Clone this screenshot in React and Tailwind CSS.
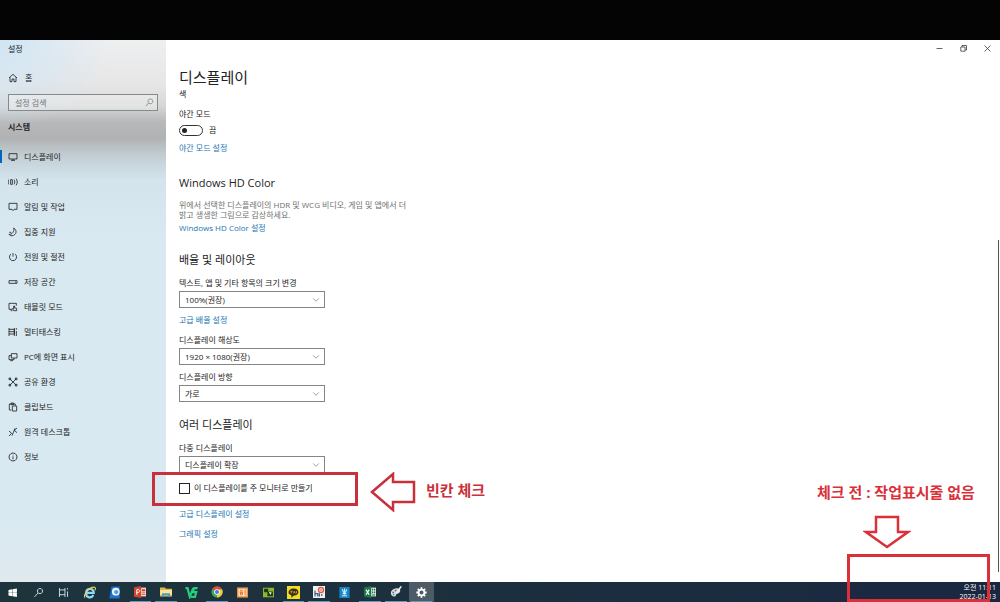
import React, { useState } from 'react';
import { ChevronDown } from 'lucide-react';

const navItems = [
  { label: '디스플레이', icon: <path d="M3 5h24v16H3zM15 21v4M9 25h12" /> },
  { label: '소리', icon: <path d="M2 8c-2 4-2 10 0 14M8 8h5v14H8zM18 8c3 4 3 10 0 14M24 5c5 6 5 14 0 20" /> },
  { label: '알림 및 작업', icon: <path d="M3 4h24v18h-9l-3 4-3-4H3z" /> },
  { label: '집중 지원', icon: <path d="M17 3c9 5 10 17 0 22-6 3-12 1-14-3 9 1 17-8 14-19zM4 16h6" /> },
  { label: '전원 및 절전', icon: <path d="M15 3v11M9 6C1 11 4 26 15 26S29 11 21 6" /> },
  { label: '저장 공간', icon: <path d="M3 11h24v8H3zM21 15h3" /> },
  { label: '태블릿 모드', icon: <path d="M12 22H3V4h22v7M8 26h5M17 26l-4-6 4 1v-9h3v6l6 1v7z" /> },
  { label: '멀티태스킹', icon: <path d="M3 3v24M3 7h16v14H3M19 3v24M3 14h16M25 3v5M25 12v15" /> },
  { label: 'PC에 화면 표시', icon: <path d="M10 5h17v13H10zM10 11H3v12h15v-5M7 26h8" /> },
  { label: '공유 환경', icon: <path d="M6 6l18 18M24 6L6 24M3 3h5v5H3zM22 3h5v5h-5zM3 22h5v5H3zM22 22h5v5h-5z" /> },
  { label: '클립보드', icon: <path d="M10 24H4V6h18v5M9 3h8v5H9zM13 12h13v15H13z" /> },
  { label: '원격 데스크톱', icon: <path d="M3 12l8 7-8 8M27 3l-8 7 8 7M12 26L21 4" /> },
  { label: '정보', icon: <path d="M15 3a12 12 0 1 0 .1 0zM15 13v9M15 8v2" /> },
];

function LineIcon({ children, className = 'size-[10px]' }) {
  return (
    <svg viewBox="0 0 30 30" fill="none" stroke="currentColor" strokeWidth="2.5" className={className} aria-hidden="true">
      {children}
    </svg>
  );
}

function Sidebar() {
  return (
    <aside className="w-[166px] shrink-0 bg-[radial-gradient(110px_90px_at_0_0,#cfe5f5_0%,transparent_100%),linear-gradient(#eeeff0_0,#e6e6e7_45px,#d6d7d7_66px,#b7b8b9_82px,#b0b2b3_98px,#c3ced4_116px,#d3e4ed_140px,#d9e9f1_200px,#d8e9f2_470px,#dfe9ee_542px)]">
      <div className="flex h-[17px] items-center pl-2">설정</div>
      <a href="#home" className="mt-[13px] flex h-4 items-center gap-[7px] pl-2">
        <LineIcon><path d="M3 15L15 4l12 11M6 13v13h6v-8h6v8h6V13" /></LineIcon>
        홈
      </a>
      <div className="relative mx-2 mt-2">
        <input
          type="text"
          aria-label="설정 검색"
          placeholder="설정 검색"
          className="block h-[17px] w-full border border-[#858a8d] bg-white/30 px-1.5 outline-none placeholder:text-[#777]"
        />
        <LineIcon className="absolute right-1 top-1 size-[9px] text-[#777]">
          <path d="M18 3a8 8 0 1 0 .1 0zM12 17L3 27" />
        </LineIcon>
      </div>
      <h2 className="mt-[11px] pl-2 font-bold leading-[10px]">시스템</h2>
      <nav className="mt-3">
        {navItems.map((item, i) => (
          <a key={item.label} href="#settings" className="relative flex h-[25px] items-center gap-1.5 pl-2">
            {i === 0 && <span className="absolute left-0 h-[13px] w-0.5 bg-[#0067c0]" />}
            <LineIcon>{item.icon}</LineIcon>
            {item.label}
          </a>
        ))}
      </nav>
    </aside>
  );
}

function Field({ id, label, value, className }) {
  return (
    <div className={className}>
      <label htmlFor={id} className="block">{label}</label>
      <div className="relative mt-[3px] w-[146px]">
        <select id={id} className="block h-[17px] w-full appearance-none border border-[#858585] bg-white px-[5px]">
          <option>{value}</option>
        </select>
        <ChevronDown className="pointer-events-none absolute right-1 top-1 size-[10px] text-[#666]" strokeWidth={1.5} />
      </div>
    </div>
  );
}

function SettingsLink({ className, children }) {
  return (
    <div className={className}>
      <a href="#more" className="block w-fit text-[#1b76b3]">{children}</a>
    </div>
  );
}

function DisplaySettings() {
  const [nightMode, setNightMode] = useState(false);
  const [mainMonitor, setMainMonitor] = useState(false);

  return (
    <main className="relative flex-1 bg-white pl-[13px]">
      <div className="flex h-[17px] items-center justify-end gap-[15px] pr-2 text-[#333]">
        <button aria-label="최소화"><LineIcon className="size-[9px]"><path d="M5 15h20" /></LineIcon></button>
        <button aria-label="이전 크기로"><LineIcon className="size-[9px]"><path d="M6 10h14v14H6zM10 10V5h15v15h-5" /></LineIcon></button>
        <button aria-label="닫기"><LineIcon className="size-[9px]"><path d="M5 5l20 20M25 5L5 25" /></LineIcon></button>
      </div>

      <h1 className="mt-2 text-[15px] leading-6">디스플레이</h1>
      <div className="mt-px leading-[7px]">색</div>

      <div className="mt-3">야간 모드</div>
      <div className="mt-[5px] flex h-3 items-center gap-1.5">
        <button
          role="switch"
          aria-checked={nightMode}
          aria-label="야간 모드"
          onClick={() => setNightMode(!nightMode)}
          className={`flex h-[11px] w-6 items-center rounded-full border border-[#333] px-0.5 ${nightMode ? 'justify-end' : 'justify-start'}`}
        >
          <span className="size-[5px] rounded-full bg-[#222]" />
        </button>
        <span>{nightMode ? '켬' : '끔'}</span>
      </div>
      <SettingsLink className="mt-[7px]">야간 모드 설정</SettingsLink>

      <h2 className="mt-[22px] text-[11px] leading-4">Windows HD Color</h2>
      <p className="mt-[9px] text-[#707070]">
        위에서 선택한 디스플레이의 HDR 및 WCG 비디오, 게임 및 앱에서 더
        <br />
        밝고 생생한 그림으로 감상하세요.
      </p>
      <SettingsLink className="mt-[3px]">Windows HD Color 설정</SettingsLink>

      <h2 className="mt-[19px] text-[11px] leading-4">배율 및 레이아웃</h2>
      <Field id="scale" className="mt-[10px]" label="텍스트, 앱 및 기타 항목의 크기 변경" value="100%(권장)" />
      <SettingsLink className="mt-[7px]">고급 배율 설정</SettingsLink>
      <Field id="resolution" className="mt-[10px]" label="디스플레이 해상도" value="1920 × 1080(권장)" />
      <Field id="orientation" className="mt-[7px]" label="디스플레이 방향" value="가로" />

      <h2 className="mt-[15px] text-[11px] leading-4">여러 디스플레이</h2>
      <Field id="multi" className="mt-[10px]" label="다중 디스플레이" value="디스플레이 확장" />

      <div className="relative mt-[9px] flex h-3 items-center gap-1">
        <input
          id="main-monitor"
          type="checkbox"
          checked={mainMonitor}
          onChange={(e) => setMainMonitor(e.target.checked)}
          className="size-[11px] appearance-none border border-[#222] bg-white checked:bg-[#0067c0]"
        />
        <label htmlFor="main-monitor">이 디스플레이를 주 모니터로 만들기</label>
        <div className="pointer-events-none absolute -left-[27px] -top-[10px] flex items-start gap-3 text-[#c9303b]">
          <div className="h-[34px] w-[206px] border-3 border-current" />
          <svg width="46" height="40" viewBox="0 0 46 40" fill="none" stroke="currentColor" strokeWidth="2.5">
            <path d="M2 20L23 2v8h21v20H23v8z" />
          </svg>
          <span className="mt-2 -ml-0.5 whitespace-nowrap text-[15px] font-bold leading-5">빈칸 체크</span>
        </div>
      </div>

      <SettingsLink className="mt-[15px]">고급 디스플레이 설정</SettingsLink>
      <SettingsLink className="mt-[10px]">그래픽 설정</SettingsLink>

      <div className="absolute bottom-[10px] right-px top-[200px] w-px bg-[#555]" />
    </main>
  );
}

const apps = [
  { name: '시작', art: <path fill="#fff" d="M4 8l10-2v9H4zM15 6l12-2v11H15zM4 16h10v9L4 23zM15 16h12v11l-12-2z" /> },
  { name: '검색', art: <path fill="none" stroke="#dde5e8" strokeWidth="2.5" d="M19 4a7 7 0 1 0 .1 0zM14 16L4 27" /> },
  { name: '작업 보기', art: <path fill="none" stroke="#dde5e8" strokeWidth="2.5" d="M4 3v24M4 8h15M4 21h15M19 3v24M26 3v4M26 12v15" /> },
  {
    name: 'Internet Explorer',
    wide: true,
    art: (
      <g fill="none">
        <path stroke="#8fd9f5" strokeWidth="5" d="M8 16h17c0-13-18-12-18 1 0 11 13 12 17 4" />
        <path stroke="#e9cf58" strokeWidth="2.5" d="M5 27C-3 20 20-2 28 4c2 2 0 5-1 6" />
      </g>
    ),
  },
  {
    name: '웨일',
    wide: true,
    art: (
      <g>
        <path fill="#1f6fd0" d="M8 1h19v28H3z" />
        <circle cx="18" cy="13" r="9" fill="#e9f5ff" />
        <circle cx="19" cy="14" r="5" fill="#4c9dea" />
      </g>
    ),
  },
  {
    name: 'PowerPoint',
    open: true,
    art: (
      <g>
        <path fill="#f3d5cc" d="M14 4h16v22H14z" />
        <path fill="#d2452b" d="M0 3l18-3v30L0 27z" />
        <path fill="none" stroke="#fff" strokeWidth="2.5" d="M7 22V9h3c6 0 6 7 0 7H7" />
        <path fill="#d2452b" d="M20 8h8v5h-8zM20 16h8v2h-8zM20 20h8v2h-8z" />
      </g>
    ),
  },
  {
    name: '파일 탐색기',
    open: true,
    art: (
      <g>
        <path fill="#e3b84a" d="M0 4h12l3 3h15v19H0z" />
        <path fill="#fae498" d="M0 10h30v12H0z" />
        <path fill="#4b9bd0" d="M5 18h20v9h-5v-4H10v4H5z" />
      </g>
    ),
  },
  { name: 'V3', wide: true, art: <path fill="none" stroke="#27cf7c" strokeWidth="5" d="M1 5h5l5 20L19 5M29 5h-8l-3 9h8l-3 11h-9" /> },
  {
    name: 'Chrome',
    open: true,
    art: (
      <g>
        <circle cx="15" cy="15" r="14" fill="#3ba757" />
        <path fill="#e54b3d" d="M15 15L3 8C8-2 23-2 28 9H15z" />
        <path fill="#f6c83b" d="M15 15l6-6h7c4 9-3 20-13 20z" />
        <circle cx="15" cy="15" r="7" fill="#fff" />
        <circle cx="15" cy="15" r="5" fill="#3c7dde" />
      </g>
    ),
  },
  {
    name: '한글 뷰어',
    art: (
      <g>
        <path fill="#ed8f3b" d="M0 1h30v28H0z" />
        <path fill="#fbe9d7" d="M4 5h22v20H4z" />
        <path fill="none" stroke="#e4782a" strokeWidth="3" d="M8 9h8M7 14h10M12 16a3 3 0 1 0 .1 0M22 7v16" />
      </g>
    ),
  },
  {
    name: '캡처',
    art: (
      <g>
        <path fill="#8db72d" d="M0 2h30v26H0z" />
        <path fill="#1c3518" d="M3 5h11v7h13v13H12V14H3z" />
        <path fill="#f0f5bd" d="M16 13l4 9 4-7z" />
      </g>
    ),
  },
  {
    name: '카카오톡',
    open: true,
    wide: true,
    art: (
      <g>
        <path fill="#f5dc20" d="M0 0h30v30H0z" />
        <path fill="#3b2a1c" d="M15 6c15 0 15 16 1 16l-6 5v-6C-1 18 3 6 15 6z" />
        <path fill="none" stroke="#d8bd2a" strokeWidth="2" d="M8 12h5M10 12v5M15 17l2-5 2 5M22 12v5" />
      </g>
    ),
  },
  {
    name: '한컴오피스',
    open: true,
    art: (
      <g>
        <path fill="#eef0f2" d="M0 0h30v30H0z" />
        <circle cx="20" cy="10" r="8" fill="#e2573c" />
        <path fill="none" stroke="#375d86" strokeWidth="3" d="M5 11v15M5 19h7v7M16 18v8M22 20v5" />
        <path fill="none" stroke="#fff" strokeWidth="2" d="M17 7h6v6h-6z" />
      </g>
    ),
  },
  {
    name: '원격 지원',
    art: (
      <g>
        <path fill="#1684c7" d="M1 0h28v30H1z" />
        <path fill="none" stroke="#c9ecff" strokeWidth="3" d="M9 6l3 8h6l3-8M15 4v17M8 24h14M10 18h10" />
      </g>
    ),
  },
  {
    name: 'Excel',
    open: true,
    art: (
      <g>
        <path fill="#dcebdf" d="M15 4h15v22H15z" />
        <path fill="#1d7444" d="M0 3l18-3v30L0 27zM20 7h3v4h-3zM25 7h3v4h-3zM20 14h3v4h-3zM25 14h3v4h-3zM20 21h8v3h-8z" />
        <path fill="none" stroke="#fff" strokeWidth="3" d="M5 9l8 13M13 9L5 22" />
      </g>
    ),
  },
  {
    name: '그림판',
    open: true,
    art: (
      <g>
        <path fill="#d7dde0" d="M13 6c15-3 16 10 6 13-5 1-3 5-6 7C1 29-4 11 13 6z" />
        <circle cx="8" cy="16" r="2.5" fill="#5d7f91" />
        <circle cx="14" cy="11" r="2.5" fill="#b2594c" />
        <circle cx="9" cy="22" r="2" fill="#55975c" />
        <path stroke="#eaf1f4" strokeWidth="4" d="M28 1L16 18" />
      </g>
    ),
  },
  {
    name: '설정',
    active: true,
    art: (
      <g fill="none" stroke="#fff">
        <circle cx="15" cy="15" r="8" strokeWidth="5" />
        <path strokeWidth="5" d="M15 1v5M15 24v5M1 15h5M24 15h5M5 5l4 4M21 21l4 4M25 5l-4 4M5 25l4-4" />
      </g>
    ),
  },
];

function Taskbar() {
  return (
    <footer className="flex h-5 items-stretch justify-between bg-linear-to-r from-[#1d343d] via-[#1c2f3e] to-[#1a2740]">
      <div className="flex w-[434px]">
        {apps.map((app) => (
          <button
            key={app.name}
            aria-label={app.name}
            className={`relative flex flex-1 items-center justify-center ${app.active ? 'bg-[#4d5b66]' : ''}`}
          >
            <svg viewBox="0 0 30 30" className={app.wide ? 'size-[13px]' : app.open ? 'size-3' : 'size-[11px]'}>
              {app.art}
            </svg>
            {(app.open || app.active) && <span className="absolute inset-x-0.5 bottom-0 h-px bg-[#6299bd]" />}
          </button>
        ))}
      </div>
      <div className="flex flex-col justify-center pr-1 text-right text-[7px] leading-[9px] text-white">
        <span>오전 11:11</span>
        <span>2022-01-13</span>
      </div>
    </footer>
  );
}

function App() {
  return (
    <div className="relative flex min-h-screen flex-col overflow-hidden bg-white font-['Open_Sans','Noto_Sans_CJK_KR',sans-serif] text-[8px] leading-[10px] text-[#222]">
      <div className="h-10 bg-[#040404]" />
      <div className="flex flex-1">
        <Sidebar />
        <DisplaySettings />
      </div>
      <Taskbar />

      <div className="pointer-events-none absolute bottom-0 right-[10px] flex w-[173px] flex-col text-[#d9303a]">
        <span className="whitespace-nowrap text-[15px] font-bold leading-5">체크 전 : 작업표시줄 없음</span>
        <svg width="48" height="36" viewBox="0 0 48 36" fill="none" stroke="currentColor" strokeWidth="2.5" className="ml-[46px] mt-3">
          <path d="M13 3h22v15h10L24 33 3 18h10z" />
        </svg>
        <div className="mt-1 h-12 w-[143px] self-end border-3 border-current" />
      </div>
    </div>
  );
}

export default App;
